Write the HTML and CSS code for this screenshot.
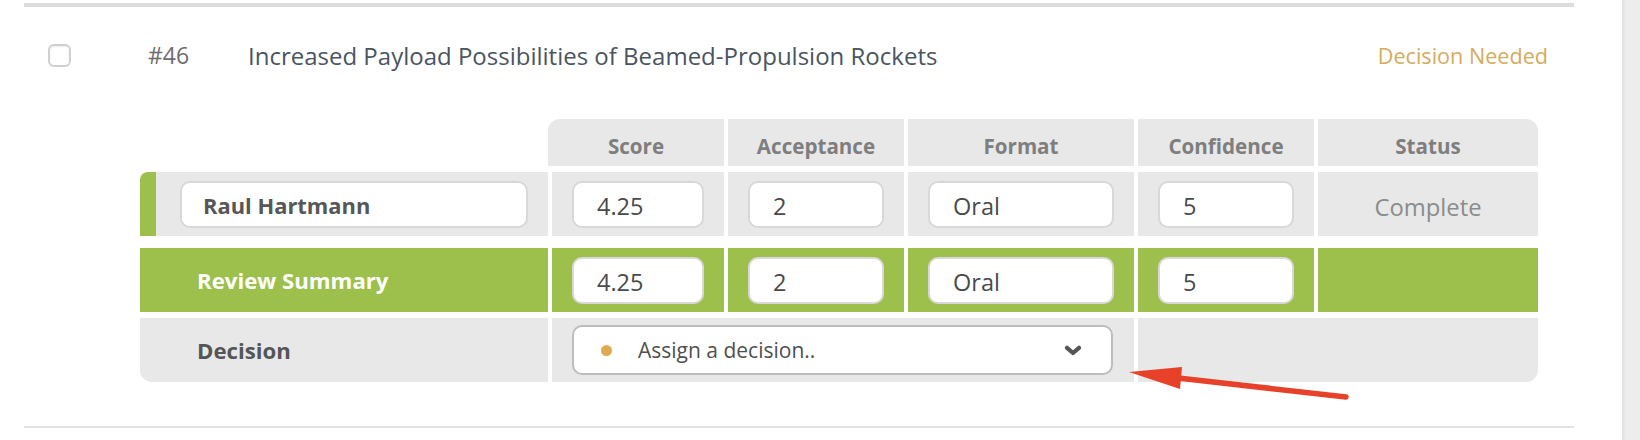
FILE: index.html
```html
<!DOCTYPE html>
<html lang="en">
<head>
<meta charset="utf-8">
<title>Submission #46</title>
<link rel="stylesheet" href="styles.css">
</head>
<body>
<div class="main">
  <div class="item">
    <div class="item-head">
      <span class="checkbox"></span>
      <span class="item-id">#46</span>
      <span class="item-title">Increased Payload Possibilities of Beamed-Propulsion Rockets</span>
      <span class="item-status">Decision Needed</span>
    </div>
    <div class="review">
      <div class="trow thead">
        <div class="cell blank"></div>
        <div class="cell hcell first-h">Score</div>
        <div class="cell hcell">Acceptance</div>
        <div class="cell hcell">Format</div>
        <div class="cell hcell">Confidence</div>
        <div class="cell hcell last-h">Status</div>
      </div>
      <div class="trow reviewer">
        <div class="cell name-cell"><div class="field name">Raul Hartmann</div></div>
        <div class="cell"><div class="field">4.25</div></div>
        <div class="cell"><div class="field">2</div></div>
        <div class="cell"><div class="field">Oral</div></div>
        <div class="cell"><div class="field">5</div></div>
        <div class="cell status">Complete</div>
      </div>
      <div class="trow summary">
        <div class="cell label">Review Summary</div>
        <div class="cell"><div class="field">4.25</div></div>
        <div class="cell"><div class="field">2</div></div>
        <div class="cell"><div class="field">Oral</div></div>
        <div class="cell"><div class="field">5</div></div>
        <div class="cell"></div>
      </div>
      <div class="trow decision">
        <div class="cell label dec-label">Decision</div>
        <div class="cell span3">
          <div class="select">
            <span class="dot"></span>
            <span class="select-text">Assign a decision..</span>
            <svg class="chevron" width="18" height="11" viewBox="0 0 18 11"><path d="M3 2.8 L9 8 L15 2.8" fill="none" stroke="#555" stroke-width="4.2" stroke-linecap="round" stroke-linejoin="round"/></svg>
          </div>
        </div>
        <div class="cell span2 dec-end"></div>
      </div>
    </div>
  </div>
  <svg class="arrow" width="240" height="45" viewBox="0 0 240 45">
    <line x1="226" y1="37" x2="58" y2="18" stroke="#e8412a" stroke-width="5.5" stroke-linecap="round"/>
    <polygon points="9,12 62,7 60,29" fill="#e8412a"/>
  </svg>
</div>
<div class="scrollbar"></div>
</body>
</html>
```
FILE: styles.css
```css
* { box-sizing: border-box; }
html, body { margin: 0; padding: 0; background: #fff; }
body {
  display: flex;
  width: 1640px;
  height: 440px;
  overflow: hidden;
  font-family: "Open Sans", "Liberation Sans", sans-serif;
}
.main {
  position: relative;
  flex: 1;
  padding: 3px 48px 0 24px;
}
.scrollbar {
  width: 18px;
  flex: none;
  background: linear-gradient(to right, #e0e0e0, #ededed 4px, #eeeeee);
}
.item {
  border-top: 4px solid #dcdcdc;
  border-bottom: 2px solid #e2e2e2;
}
.item-head {
  height: 96px;
  display: flex;
  align-items: center;
  padding: 0 26px 0 24px;
}
.checkbox {
  width: 23px;
  height: 23px;
  border: 2px solid #d0d0d0;
  border-radius: 6px;
  box-shadow: inset 0 1px 2px rgba(0,0,0,0.08);
  margin-right: 77px;
  flex: none;
}
.item-id {
  width: 100px;
  font-size: 23px;
  color: #6d6d6d;
  flex: none;
}
.item-title {
  flex: 1;
  font-size: 24px;
  color: #4a5561;
}
.item-status {
  font-size: 21.6px;
  color: #d6ab5e;
}
.review {
  margin: 16px 36px 44px 116px;
}
.trow {
  display: grid;
  grid-template-columns: 408px 172px 176px 226px 176px 220px;
  column-gap: 4px;
}
.thead { height: 47px; margin-bottom: 6px; }
.reviewer { height: 64px; margin-bottom: 12px; }
.summary { height: 64px; margin-bottom: 6px; }
.decision { height: 64px; }
.cell {
  background: #e8e8e8;
  display: flex;
  align-items: center;
  padding: 0 20px 0 20px;
}
.blank { background: transparent; }
.hcell {
  justify-content: center;
  font-weight: 700;
  font-size: 20.6px;
  color: #7e7e7e;
  padding: 6px 0 0 0;
}
.first-h { margin-left: -4px; border-top-left-radius: 12px; }
.last-h { border-top-right-radius: 12px; }
.name-cell {
  border-left: 16px solid #9cc04b;
  border-top-left-radius: 8px;
  padding-left: 24px;
}
.field {
  width: 100%;
  height: 47px;
  background: #fff;
  border: 2px solid #d8d8d8;
  border-radius: 10px;
  display: flex;
  align-items: center;
  padding: 3px 0 0 23px;
  font-size: 23.5px;
  color: #4a4a4a;
}
.field.name {
  padding-left: 21px;
  font-weight: 700;
  font-size: 21.9px;
  color: #575757;
}
.status {
  justify-content: center;
  padding-top: 5px;
  font-size: 23.8px;
  color: #8c8c8c;
}
.summary .cell { background: #9cc04b; }
.label {
  padding-left: 57px;
  font-weight: 700;
  font-size: 22.2px;
}
.summary .label { color: #fff; }
.dec-label { color: #555; border-bottom-left-radius: 12px; }
.span3 { grid-column: span 3; padding-right: 21px; }
.span2 { grid-column: span 2; }
.dec-end { border-bottom-right-radius: 12px; }
.select {
  width: 100%;
  height: 50px;
  background: #fff;
  border: 2px solid #bdbdbd;
  border-radius: 10px;
  display: flex;
  align-items: center;
  padding: 0 29px 0 27px;
}
.dot {
  width: 11px;
  height: 11px;
  border-radius: 50%;
  background: #e1a94f;
  margin-right: 26px;
  flex: none;
}
.select-text {
  flex: 1;
  font-size: 21px;
  color: #4f4f4f;
}
.chevron { flex: none; }
.arrow {
  position: absolute;
  left: 1120px;
  top: 360px;
  pointer-events: none;
}
```
